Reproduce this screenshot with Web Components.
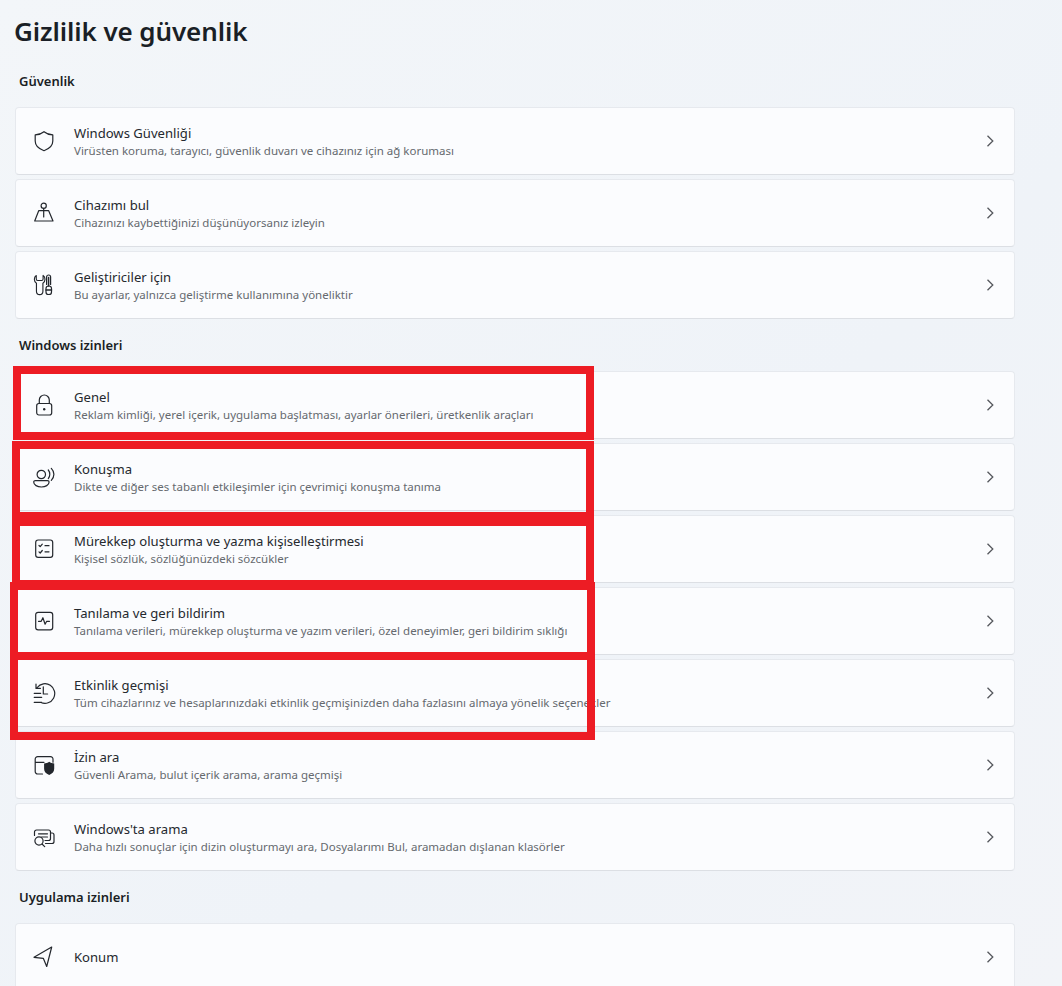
<!DOCTYPE html>
<html lang="tr">
<head>
<meta charset="utf-8">
<title>Gizlilik ve güvenlik</title>
<style>
  html, body { margin: 0; height: 986px; overflow: hidden; background: #f2f5f9; }
</style>
</head>
<body>
<privacy-page>
  <page-title>Gizlilik ve güvenlik</page-title>

  <group-label>Güvenlik</group-label>
  <card-list>
    <setting-card icon="shield" heading="Windows Güvenliği" desc="Virüsten koruma, tarayıcı, güvenlik duvarı ve cihazınız için ağ koruması"></setting-card>
    <setting-card icon="find" heading="Cihazımı bul" desc="Cihazınızı kaybettiğinizi düşünüyorsanız izleyin"></setting-card>
    <setting-card icon="dev" heading="Geliştiriciler için" desc="Bu ayarlar, yalnızca geliştirme kullanımına yöneliktir"></setting-card>
  </card-list>

  <group-label>Windows izinleri</group-label>
  <card-list>
    <setting-card icon="lock" heading="Genel" desc="Reklam kimliği, yerel içerik, uygulama başlatması, ayarlar önerileri, üretkenlik araçları"></setting-card>
    <setting-card icon="speech" heading="Konuşma" desc="Dikte ve diğer ses tabanlı etkileşimler için çevrimiçi konuşma tanıma"></setting-card>
    <setting-card icon="ink" heading="Mürekkep oluşturma ve yazma kişiselleştirmesi" desc="Kişisel sözlük, sözlüğünüzdeki sözcükler"></setting-card>
    <setting-card icon="pulse" heading="Tanılama ve geri bildirim" desc="Tanılama verileri, mürekkep oluşturma ve yazım verileri, özel deneyimler, geri bildirim sıklığı"></setting-card>
    <setting-card icon="history" heading="Etkinlik geçmişi" desc="Tüm cihazlarınız ve hesaplarınızdaki etkinlik geçmişinizden daha fazlasını almaya yönelik seçenekler"></setting-card>
    <setting-card icon="safe" heading="İzin ara" desc="Güvenli Arama, bulut içerik arama, arama geçmişi"></setting-card>
    <setting-card icon="winsearch" heading="Windows'ta arama" desc="Daha hızlı sonuçlar için dizin oluşturmayı ara, Dosyalarımı Bul, aramadan dışlanan klasörler"></setting-card>
  </card-list>

  <group-label>Uygulama izinleri</group-label>
  <card-list>
    <setting-card icon="nav" heading="Konum"></setting-card>
  </card-list>

  <!-- red annotation frames drawn over the screenshot -->
  <mark-box style="left:13px;top:366px;width:581px;height:74px"></mark-box>
  <mark-box style="left:12px;top:441px;width:582px;height:79px"></mark-box>
  <mark-box style="left:12px;top:518px;width:582px;height:70px"></mark-box>
  <mark-box style="left:10px;top:582px;width:585px;height:78px"></mark-box>
  <mark-box style="left:10px;top:652px;width:585px;height:88px"></mark-box>
</privacy-page>

<script>
(function(){
  const FONT = '"Noto Sans", "Open Sans", sans-serif';

  const icons = {
    shield: '<path d="M12 2.700c2.400 2 5.200 3 8.800 3.200v6.200c0 4.400-2.900 7.600-8.800 9.600-5.900-2-8.800-5.200-8.800-9.600V5.900C6.800 5.700 9.600 4.700 12 2.700z"/>',
    find: '<circle cx="11.700" cy="4.700" r="2.600"/><path d="M11.700 7.300V16M6.700 9.700h10L21 20H2.700z"/>',
    dev: '<path d="M4.800 2.500C3.500 3.300 2.800 4.700 2.800 6.300c0 1.800 1 3.200 2.200 4v8a3.400 3.400 0 0 0 6.800 0v-8c1.200-.8 2.200-2.200 2.200-4 0-1.600-.7-3-2-3.800V6a1.500 1.500 0 0 1-1.500 1.500H6.300A1.500 1.500 0 0 1 4.800 6z" transform="translate(-.3 0) scale(.95 1)"/><path d="M14.600 11.500V4a2 2 0 0 1 4 0v7.500"/><rect x="14" y="13" width="5.500" height="8.500" rx="2.600"/><path d="M16.600 4.500v8.500M14 17h5.500" stroke-width="1.500"/>',
    lock: '<rect x="4.700" y="10.500" width="15" height="11.500" rx="2.200"/><path d="M7.300 10.500V7a5 5 0 0 1 10 0v3.500"/><circle cx="12.200" cy="16.200" r="1.200" fill="currentColor" stroke="none"/>',
    speech: '<circle cx="9.300" cy="9.500" r="4.200"/><path d="M1.700 17c0-.9.700-1.300 1.600-1.300h12.200c.9 0 1.600.4 1.600 1.300 0 3-3.700 5-7.700 5s-7.700-2-7.700-5z"/><path d="M16.300 5c1 1.200 1.500 2.600 1.500 4.300s-.5 3.100-1.500 4.300M19.300 3.300c1.700 1.700 2.600 3.700 2.600 6s-.9 4.300-2.600 6"/>',
    ink: '<rect x="3.700" y="3" width="17" height="17.300" rx="2.400"/><path d="M7 8.500l1.200 1.200L10.300 7.200M7 14.800l1.200 1.200 2.100-2.500M13 8.700h4M13 14.800h4"/>',
    pulse: '<rect x="3.700" y="3.300" width="17" height="17.500" rx="2.400"/><path d="M6.500 12.300h2.700l1.700-3.600 2.200 6.500 1.600-2.900h2.800"/>',
    history: '<path d="M5.200 6.500A9.800 9.800 0 1 1 9 21.500M4 3v4.400h4.400M11.300 5.800v7.200h4.300M2.200 12.300h6.500M2.200 16.300h7.500M2.200 21.300h7.500"/>',
    safe: '<path d="M10.500 21H5.700A2.500 2.500 0 0 1 3.200 18.500V6.200A2.500 2.500 0 0 1 5.700 3.700h12.800A2.500 2.500 0 0 1 21 6.200v3M3.200 9.300h8.800"/><path d="M17.200 8.700c1.400 1.100 3 1.600 5 1.700v5.400c0 3-1.700 4.900-5 6.200-3.400-1.300-5.100-3.200-5.100-6.200v-5.400c2-.1 3.700-.6 5.100-1.700z" fill="currentColor" stroke="none"/>',
    winsearch: '<path d="M2.500 10.500V7A2 2 0 0 1 4.500 5h12a2 2 0 0 1 2 2v6.500a2 2 0 0 1-2 2H13M6.500 8.800h9M9.500 12h6M18.500 8h1.500a2 2 0 0 1 2 2v6.500a2 2 0 0 1-2 2h-6.500"/><circle cx="7" cy="16" r="4.100"/><path d="M10 19l2.700 2.700"/>',
    nav: '<path d="M19.700 2 2 12.300l9.300 1 3.400 8.200z"/>'
  };

  class PrivacyPage extends HTMLElement {
    constructor () {
      super();
      this.attachShadow({mode: 'open'}).innerHTML = `
        <style>
        :host { display: flex; flex-direction: column; position: relative; width: 1062px; height: 986px; overflow: hidden; box-sizing: border-box; padding: 0 47px 0 15px;
          background: linear-gradient(135deg, #f3f6f9 0%, #eff3f8 60%, #f2f4f8 100%); font-family: ${FONT}; }
        </style>
        <slot></slot>
      `;
    }
  }

  class PageTitle extends HTMLElement {
    constructor () {
      super();
      this.attachShadow({mode: 'open'}).innerHTML = `
        <style>
        :host { display: block; flex: none; margin: 11px 0 0 -1px; height: 44px; line-height: 40px; font-size: 26px; font-weight: 600; color: #1a1f26; letter-spacing: -.1px; }
        </style>
        <slot></slot>
      `;
    }
  }

  class GroupLabel extends HTMLElement {
    constructor () {
      super();
      this.attachShadow({mode: 'open'}).innerHTML = `
        <style>
        :host { display: block; flex: none; margin: 0 0 0 4px; height: 52px; padding-top: 16px; box-sizing: border-box; line-height: 20px; font-size: 13px; font-weight: 600; color: #1b1f25; }
        </style>
        <slot></slot>
      `;
    }
  }

  class CardList extends HTMLElement {
    constructor () {
      super();
      this.attachShadow({mode: 'open'}).innerHTML = `
        <style>
        :host { display: flex; flex-direction: column; flex: none; gap: 4px; }
        </style>
        <slot></slot>
      `;
    }
  }

  class SettingCard extends HTMLElement {
    constructor () {
      super();
      const root = this.attachShadow({mode: 'open'});
      const heading = this.getAttribute('heading') || '';
      const desc = this.getAttribute('desc');
      root.innerHTML = `
        <style>
        :host { display: flex; align-items: center; height: 68px; flex: none; box-sizing: border-box; padding: 0 16px; gap: 18px;
          background: #fbfcfe; border: 1px solid #e6e9ee; border-bottom-color: #dcdfe4; border-radius: 4px; }
        svg.icon { width: 24px; height: 24px; flex: none; fill: none; stroke: currentColor; stroke-width: 1.2; stroke-linejoin: round; stroke-linecap: round; color: #23272d; }
        .text { flex: 1; min-width: 0; display: flex; flex-direction: column; }
        .text.two { padding-top: 2px; }
        .heading { font-size: 13.100px; line-height: 18px; color: #25292e; }
        .desc { font-size: 11.500px; line-height: 18px; color: #65696e; white-space: nowrap; }
        svg.chev { width: 12px; height: 12px; flex: none; fill: none; stroke: #55585d; stroke-width: 1.3; margin-right: 2px; }
        </style>
        <svg class="icon" viewBox="0 0 24 24">${icons[this.getAttribute('icon')] || ''}</svg>
        <div class="text ${desc ? 'two' : ''}">
          <div class="heading">${heading}</div>
          ${desc ? `<div class="desc">${desc}</div>` : ''}
        </div>
        <svg class="chev" viewBox="0 0 12 12"><path d="M3.500.7 8.800 6 3.500 11.300"/></svg>
      `;
    }
  }

  class MarkBox extends HTMLElement {
    constructor () {
      super();
      this.attachShadow({mode: 'open'}).innerHTML = `
        <style>
        :host { display: block; position: absolute; box-sizing: border-box; border: 8px solid #ed1c24; pointer-events: none; }
        </style>
      `;
    }
  }

  customElements.define('privacy-page', PrivacyPage);
  customElements.define('page-title', PageTitle);
  customElements.define('group-label', GroupLabel);
  customElements.define('card-list', CardList);
  customElements.define('setting-card', SettingCard);
  customElements.define('mark-box', MarkBox);
})();
</script>
</body>
</html>
